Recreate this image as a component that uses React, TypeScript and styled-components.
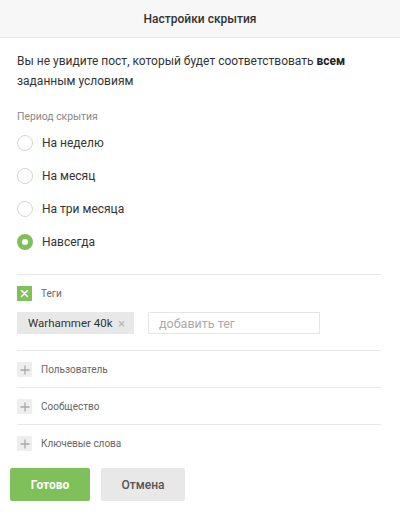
import * as React from 'react';
import styled, { createGlobalStyle } from 'styled-components';

const GREEN = '#7fc05b';

const Global = createGlobalStyle`
  html, body { margin: 0; padding: 0; background: #fff; }
  body { font-family: Roboto, "Noto Sans", Arial, sans-serif; color: #333; }
  * { box-sizing: border-box; }
`;

const Header = styled.div`
  height: 38px;
  background: #f7f7f7;
  border-bottom: 1px solid #e6e6e6;
  display: flex;
  align-items: center;
  justify-content: center;
  font-size: 12px;
  font-weight: 500;
  color: #333;
`;

const Body = styled.div`
  padding: 13px 19px 0 17px;
`;

const Intro = styled.p`
  margin: 0;
  font-size: 12px;
  line-height: 20px;
  color: #333;
  b { font-weight: 700; color: #222; }
`;

const GroupLabel = styled.div`
  margin-top: 19px;
  font-size: 10.4px;
  line-height: 14px;
  color: #888;
`;

const RadioList = styled.div`
  margin-top: 2px;
  display: flex;
  flex-direction: column;
`;

const RadioRow = styled.label`
  height: 33px;
  display: flex;
  align-items: center;
  gap: 9px;
  font-size: 12px;
  color: #333;
  cursor: pointer;
`;

const RadioCircle = styled.span<{ $checked: boolean }>`
  width: 16px;
  height: 16px;
  border-radius: 50%;
  flex-shrink: 0;
  background: #fff;
  border: ${({ $checked }) => ($checked ? `5px solid ${GREEN}` : '1px solid #d4d4d4')};
`;

const Divider = styled.div`
  height: 1px;
  background: #e8e8e8;
  margin-top: 16px;
`;

const FilterHead = styled.div`
  display: flex;
  align-items: center;
  gap: 9px;
  height: 15px;
  font-size: 10px;
  color: #666;
`;

const Square = styled.span<{ $active?: boolean }>`
  width: 15px;
  height: 15px;
  flex-shrink: 0;
  display: flex;
  align-items: center;
  justify-content: center;
  background: ${({ $active }) => ($active ? GREEN : '#eeeeee')};
`;

const TagsSection = styled.div`
  padding-top: 11px;
`;

const TagLine = styled.div`
  margin-top: 11px;
  display: flex;
  gap: 14px;
`;

const Chip = styled.span`
  height: 22px;
  width: 117px;
  padding: 0 9px 0 11px;
  background: #e8e8e8;
  display: flex;
  align-items: center;
  justify-content: space-between;
  font-size: 11.5px;
  color: #333;
  span { color: #b5b5b5; font-size: 13px; }
`;

const TagInput = styled.input`
  height: 22px;
  width: 172px;
  border: 1px solid #e6e6e6;
  padding: 0 10px;
  font-family: inherit;
  font-size: 12.5px;
  color: #333;
  outline: none;
  &::placeholder { color: #aaa; }
`;

const Collapsed = styled.div<{ $last?: boolean }>`
  padding: 11px 0 10px;
  border-bottom: ${({ $last }) => ($last ? 'none' : '1px solid #e8e8e8')};
`;

const Footer = styled.div`
  display: flex;
  gap: 11px;
  padding: 7px 0 0 10px;
`;

const Button = styled.button<{ $primary?: boolean }>`
  height: 33px;
  width: ${({ $primary }) => ($primary ? '80px' : '84px')};
  border: none;
  border-radius: 2px;
  font-family: inherit;
  font-size: 12px;
  font-weight: ${({ $primary }) => ($primary ? 700 : 500)};
  background: ${({ $primary }) => ($primary ? GREEN : '#e8e8e8')};
  color: ${({ $primary }) => ($primary ? '#fff' : '#555')};
  cursor: pointer;
`;

const Cross = ({ color }: { color: string }) => (
  <svg width="9" height="9" viewBox="0 0 9 9">
    <path d="M1.5 1.5L7.5 7.5M7.5 1.5L1.5 7.5" stroke={color} strokeWidth="1.6" strokeLinecap="round" />
  </svg>
);

const Plus = () => (
  <svg width="10" height="10" viewBox="0 0 10 10">
    <path d="M5 0.5V9.5M0.5 5H9.5" stroke="#a8a8a8" strokeWidth="1.3" />
  </svg>
);

const periods = ['На неделю', 'На месяц', 'На три месяца', 'Навсегда'];
const filters = ['Пользователь', 'Сообщество', 'Ключевые слова'];

export default function App() {
  const [period, setPeriod] = React.useState(3);

  return (
    <>
      <Global />
      <Header>Настройки скрытия</Header>
      <Body>
        <Intro>
          Вы не увидите пост, который будет соответствовать <b>всем</b> заданным условиям
        </Intro>
        <GroupLabel>Период скрытия</GroupLabel>
        <RadioList>
          {periods.map((p, i) => (
            <RadioRow key={p} onClick={() => setPeriod(i)}>
              <RadioCircle $checked={period === i} />
              {p}
            </RadioRow>
          ))}
        </RadioList>
        <Divider />
        <TagsSection>
          <FilterHead>
            <Square $active>
              <Cross color="#fff" />
            </Square>
            Теги
          </FilterHead>
          <TagLine>
            <Chip>
              Warhammer 40k <span>×</span>
            </Chip>
            <TagInput placeholder="добавить тег" />
          </TagLine>
        </TagsSection>
        <Divider />
        {filters.map((f, i) => (
          <Collapsed key={f} $last={i === filters.length - 1}>
            <FilterHead>
              <Square>
                <Plus />
              </Square>
              {f}
            </FilterHead>
          </Collapsed>
        ))}
      </Body>
      <Footer>
        <Button $primary>Готово</Button>
        <Button>Отмена</Button>
      </Footer>
    </>
  );
}
